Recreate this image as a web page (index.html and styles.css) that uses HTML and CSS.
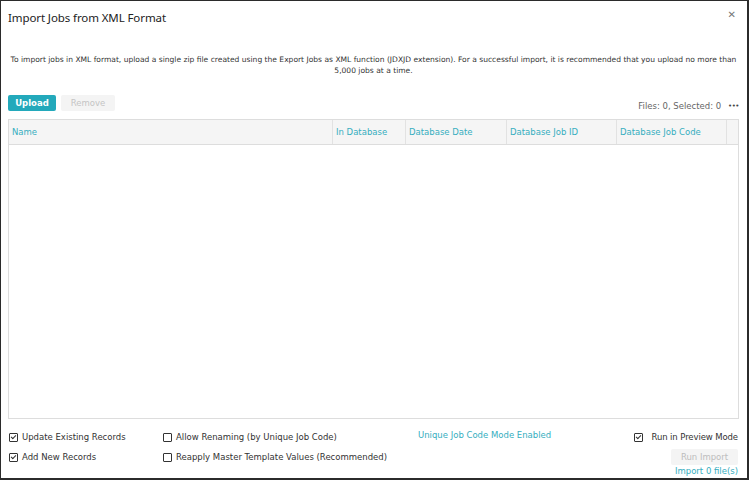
FILE: index.html
```html
<!DOCTYPE html>
<html lang="en">
<head>
    <meta charset="UTF-8">
    <title>Import Jobs from XML Format</title>
    <link rel="stylesheet" href="styles.css">
</head>
<body>
    <div class="dialog">
        <div class="dialog-header">
            <span class="dialog-title">Import Jobs from XML Format</span>
            <span class="close">&#x2715;</span>
        </div>

        <p class="intro">To import jobs in XML format, upload a single zip file created using the Export Jobs as XML function (JDXJD extension). For a successful import, it is recommended that you upload no more than 5,000 jobs at a time.</p>

        <div class="toolbar">
            <button class="btn btn-primary" type="button">Upload</button>
            <button class="btn btn-disabled" type="button">Remove</button>
            <span class="file-count">Files: 0, Selected: 0</span>
            <span class="more">&bull;&bull;&bull;</span>
        </div>

        <div class="grid">
            <div class="grid-head">
                <div class="col col-name">Name</div>
                <div class="col col-indb">In Database</div>
                <div class="col col-date">Database Date</div>
                <div class="col col-id">Database Job ID</div>
                <div class="col col-code">Database Job Code</div>
                <div class="col col-end"></div>
            </div>
        </div>

        <div class="footer">
            <div class="opt-col opt-col-1">
                <label class="opt"><span class="box checked"></span>Update Existing Records</label>
                <label class="opt"><span class="box checked"></span>Add New Records</label>
            </div>
            <div class="opt-col opt-col-2">
                <label class="opt"><span class="box"></span>Allow Renaming (by Unique Job Code)</label>
                <label class="opt"><span class="box"></span>Reapply Master Template Values (Recommended)</label>
            </div>
            <div class="opt-col opt-col-3">
                <span class="mode-note">Unique Job Code Mode Enabled</span>
            </div>
            <div class="opt-col opt-col-4">
                <label class="opt opt-preview"><span class="box checked"></span>Run in Preview Mode</label>
                <button class="btn btn-disabled btn-run" type="button">Run Import</button>
                <span class="import-link">Import 0 file(s)</span>
            </div>
        </div>
    </div>
</body>
</html>
```

FILE: styles.css
```css
body {
    margin: 0;
    background: #ffffff;
    font-family: "DejaVu Sans", Verdana, sans-serif;
    color: #333333;
}

.dialog {
    box-sizing: border-box;
    width: 749px;
    height: 480px;
    border: 1px solid #2b2b2b;
    border-right-width: 2px;
    border-bottom-width: 2px;
    display: flex;
    flex-direction: column;
    padding: 0 8px 0 7px;
    overflow: hidden;
}

.dialog-header {
    display: flex;
    justify-content: space-between;
    align-items: center;
    height: 32px;
}

.dialog-title {
    font-family: "Noto Sans", "DejaVu Sans", sans-serif;
    font-size: 11.5px;
    letter-spacing: -0.1px;
    color: #222222;
}

.close {
    font-size: 10px;
    color: #777777;
    margin-right: 3px;
    margin-top: -6px;
}

.intro {
    margin: 21px 0 0;
    text-align: center;
    font-size: 7.55px;
    line-height: 11px;
    color: #333333;
}

.toolbar {
    display: flex;
    align-items: center;
    margin-top: 19px;
    height: 16px;
}

.btn {
    font-family: "DejaVu Sans", Verdana, sans-serif;
    font-size: 8.5px;
    height: 16px;
    border: none;
    border-radius: 2px;
    padding: 0;
}

.btn-primary {
    width: 48px;
    background: #23a9bb;
    color: #ffffff;
    font-weight: bold;
}

.btn-disabled {
    width: 54px;
    margin-left: 5px;
    background: #f4f4f4;
    color: #c4c4c4;
}

.file-count {
    margin-left: auto;
    font-size: 8.5px;
    color: #666666;
    padding-top: 5px;
}

.more {
    margin-left: 7px;
    font-size: 7px;
    color: #444444;
    letter-spacing: -0.5px;
    padding-top: 5px;
}

.grid {
    margin-top: 8px;
    height: 300px;
    border: 1px solid #dddddd;
    box-sizing: border-box;
}

.grid-head {
    display: flex;
    height: 24px;
    background: #f5f5f5;
    border-bottom: 1px solid #dddddd;
}

.col {
    box-sizing: border-box;
    display: flex;
    align-items: center;
    padding-left: 3px;
    font-size: 8.5px;
    color: #35aec0;
    border-right: 1px solid #e2e2e2;
}

.col-name { width: 324px; }
.col-indb { width: 73px; }
.col-date { width: 101px; }
.col-id { width: 110px; }
.col-code { width: 110px; }
.col-end { flex: 1; border-right: none; }

.footer {
    display: flex;
    padding-top: 8px;
}

.opt-col {
    display: flex;
    flex-direction: column;
}

.opt {
    display: flex;
    align-items: center;
    height: 20px;
    font-size: 8.5px;
    color: #333333;
}

.box {
    box-sizing: border-box;
    width: 9px;
    height: 9px;
    border: 1px solid #333333;
    border-radius: 1px;
    margin-right: 4px;
    position: relative;
}

.box.checked::after {
    content: "";
    position: absolute;
    left: 2px;
    top: 0px;
    width: 2px;
    height: 4px;
    border: solid #333333;
    border-width: 0 1px 1px 0;
    transform: rotate(45deg);
}

.opt-col-1 { width: 154px; margin-left: 1px; }
.opt-col-2 { width: 255px; }
.opt-col-3 { flex: 1; }

.mode-note {
    font-size: 8.5px;
    color: #35aec0;
    line-height: 16px;
}

.opt-col-4 {
    align-items: flex-end;
    margin-right: 1px;
}

.opt-preview {
    letter-spacing: -0.1px;
}

.opt-preview .box {
    margin-right: 9px;
}

.btn-run {
    width: 67px;
    margin: 2px 0 0;
    background: #f4f4f4;
    color: #bdbdbd;
}

.import-link {
    font-size: 8.5px;
    color: #35aec0;
    margin-top: 1px;
}
```
